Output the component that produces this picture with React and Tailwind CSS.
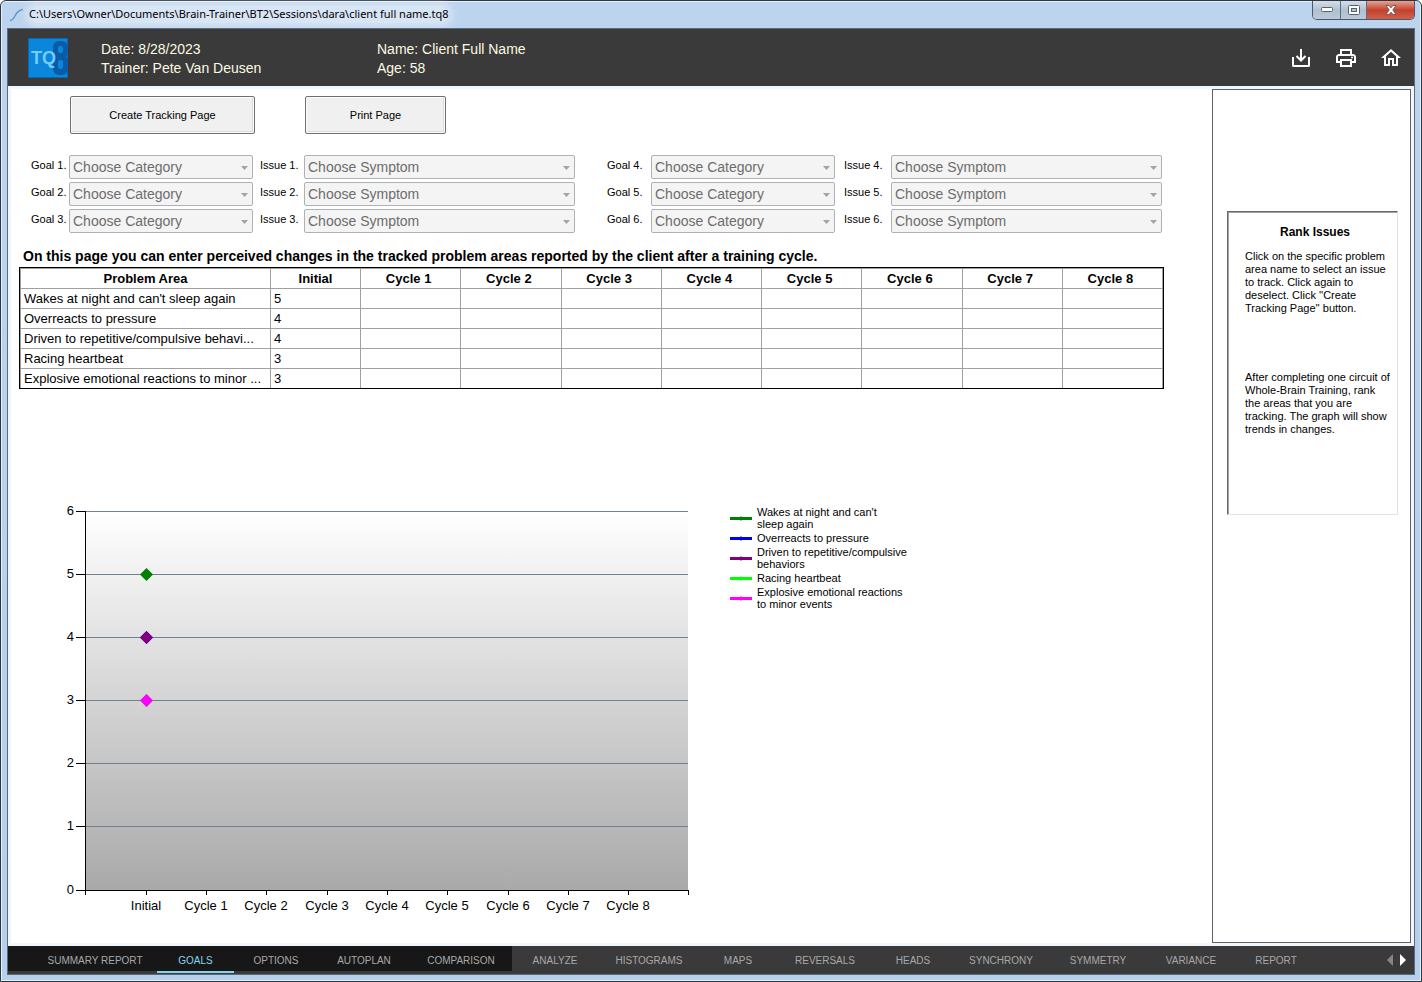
import React, { useState } from "react";
import { MdOutlineHome, MdOutlinePrint } from "react-icons/md";

const issues = [
  {
    area: "Wakes at night and can't sleep again",
    legend: ["Wakes at night and can't", "sleep again"],
    color: "#008000",
    initial: 5,
  },
  {
    area: "Overreacts to pressure",
    legend: ["Overreacts to pressure"],
    color: "#0000ee",
    initial: 4,
  },
  {
    area: "Driven to repetitive/compulsive behavi...",
    legend: ["Driven to repetitive/compulsive", "behaviors"],
    color: "#800080",
    initial: 4,
  },
  {
    area: "Racing heartbeat",
    legend: ["Racing heartbeat"],
    color: "#00ff00",
    initial: 3,
  },
  {
    area: "Explosive emotional reactions to minor ...",
    legend: ["Explosive emotional reactions", "to minor events"],
    color: "#ff00ff",
    initial: 3,
  },
];

const cycles = [1, 2, 3, 4, 5, 6, 7, 8];

const tabs = [
  { name: "SUMMARY REPORT", width: "w-[124px]", dark: true },
  { name: "GOALS", width: "w-[77px]", dark: true },
  { name: "OPTIONS", width: "w-[84px]", dark: true },
  { name: "AUTOPLAN", width: "w-[92px]", dark: true },
  { name: "COMPARISON", width: "w-[102px]", dark: true },
  { name: "ANALYZE", width: "w-[86px]" },
  { name: "HISTOGRAMS", width: "w-[102px]" },
  { name: "MAPS", width: "w-[76px]" },
  { name: "REVERSALS", width: "w-[98px]" },
  { name: "HEADS", width: "w-[78px]" },
  { name: "SYNCHRONY", width: "w-[98px]" },
  { name: "SYMMETRY", width: "w-[96px]" },
  { name: "VARIANCE", width: "w-[90px]" },
  { name: "REPORT", width: "w-[80px]" },
];

const TitleBar = () => (
  <div className="flex h-[27px] items-start justify-between">
    <div className="flex h-[27px] items-center pl-[2px]">
      <svg width="15" height="14" viewBox="0 0 15 14" fill="none">
        <path d="M1 12.500C7 12 5 2.500 14 1.500" stroke="#4f94cf" strokeWidth="1.300" />
      </svg>
      <span className="ml-[5px] rounded-full bg-white/40 font-['Noto_Sans','Open_Sans',sans-serif] text-[11px] text-black shadow-[0_0_8px_4px_rgba(255,255,255,0.4)]">
        C:\Users\Owner\Documents\Brain-Trainer\BT2\Sessions\dara\client full
        name.tq8
      </span>
    </div>
    <div className="flex h-[19px] overflow-hidden rounded-b-[5px] border border-t-0 border-[#4c5968]">
      <button
        type="button"
        aria-label="Minimize"
        className="flex w-7 items-center justify-center border-r border-[#5f6d7c] bg-linear-to-b from-[#d3dfeb] via-[#b1c0d0] via-50% to-[#b9c9da]"
      >
        <svg width="12" height="6" viewBox="0 0 12 6">
          <rect x="0.500" y="0.500" width="11" height="4" rx="1" fill="#fff" stroke="#566170" />
        </svg>
      </button>
      <button
        type="button"
        aria-label="Maximize"
        className="flex w-[26px] items-center justify-center border-r border-[#5f6d7c] bg-linear-to-b from-[#d3dfeb] via-[#b1c0d0] via-50% to-[#b9c9da]"
      >
        <svg width="12" height="10" viewBox="0 0 12 10">
          <rect x="0.500" y="0.500" width="11" height="9" rx="1" fill="#fff" stroke="#566170" />
          <rect x="3.500" y="3.500" width="5" height="3" fill="#b5c4d4" stroke="#566170" />
        </svg>
      </button>
      <button
        type="button"
        aria-label="Close"
        className="flex w-[47px] items-center justify-center bg-linear-to-b from-[#e3a193] via-[#c4412c] via-50% to-[#d0604a]"
      >
        <svg width="12" height="10" viewBox="0 0 12 10">
          <path
            d="M1 0.500h3l2 2.300 2-2.300h3L7.800 5 11 9.500H8L6 7.200 4 9.500H1L4.200 5z"
            fill="#fff"
            stroke="#69514e"
            strokeWidth="0.900"
          />
        </svg>
      </button>
    </div>
  </div>
);

const Logo = () => (
  <svg width="40" height="40" viewBox="0 0 40 40" role="img" aria-label="TQ8">
    <rect x="0.500" y="0.500" width="39" height="39" fill="#0a86da" stroke="#0a66b4" />
    <rect x="25" y="3" width="15" height="17" rx="6" fill="#0a5ca8" />
    <rect x="25" y="17" width="15" height="20" rx="6" fill="#0a5ca8" />
    <rect x="30" y="8" width="5" height="7" rx="2" fill="#0a86da" />
    <rect x="30" y="22" width="5" height="9" rx="2" fill="#0a86da" />
    <text
      x="3"
      y="26"
      fontSize="18"
      fontWeight="700"
      fill="#74cdfb"
      fontFamily="'Liberation Sans', Arial, sans-serif"
    >
      TQ
    </text>
  </svg>
);

const Header = () => (
  <header className="flex h-[57px] shrink-0 items-center bg-[#3a3a3a] pl-5 pr-[11px] text-[14px] leading-[19px] text-[#fbf9e2]">
    <Logo />
    <div className="ml-[33px] w-[276px] pt-[2px]">
      <p>Date: 8/28/2023</p>
      <p>Trainer: Pete Van Deusen</p>
    </div>
    <div className="flex-1 pt-[2px]">
      <p>Name: Client Full Name</p>
      <p>Age: 58</p>
    </div>
    <div className="flex items-center gap-[21px] text-white">
      <button type="button" aria-label="Save">
        <svg width="24" height="24" viewBox="0 0 24 24" fill="none" stroke="currentColor" strokeWidth="2">
          <path d="M4 11v8.500q0 .5.500.5h15q.5 0 .5-.5V11M12 3v11M7.500 10l4.500 4.500 4.500-4.500" />
        </svg>
      </button>
      <button type="button" aria-label="Print">
        <MdOutlinePrint size={24} />
      </button>
      <button type="button" aria-label="Home">
        <MdOutlineHome size={24} />
      </button>
    </div>
  </header>
);

const Picker = ({ id, placeholder }) => (
  <div className="relative">
    <select
      id={id}
      disabled
      className="block h-6 w-full appearance-none rounded-[2px] border border-[#adb2b5] bg-[#f4f4f4] px-[3px] text-[14px] leading-5 text-[#6d6d6d] opacity-100"
    >
      <option>{placeholder}</option>
    </select>
    <svg
      width="7"
      height="4"
      viewBox="0 0 7 4"
      className="pointer-events-none absolute right-[5px] top-[11px]"
    >
      <path d="M0 0h7L3.500 4z" fill="#a3a3a3" />
    </svg>
  </div>
);

const GoalFields = () => (
  <div className="ml-3 mr-[2px] mt-[21px] grid grid-cols-[38px_minmax(0,184fr)_51px_minmax(0,271fr)_76px_minmax(0,184fr)_56px_minmax(0,271fr)] gap-y-[3px] text-[11px] leading-5">
    {[1, 2, 3].map((row) => (
      <React.Fragment key={row}>
        <label htmlFor={`goal${row}`}>Goal {row}.</label>
        <Picker id={`goal${row}`} placeholder="Choose Category" />
        <label htmlFor={`issue${row}`} className="pl-[7px]">
          Issue {row}.
        </label>
        <Picker id={`issue${row}`} placeholder="Choose Symptom" />
        <label htmlFor={`goal${row + 3}`} className="pl-8">
          Goal {row + 3}.
        </label>
        <Picker id={`goal${row + 3}`} placeholder="Choose Category" />
        <label htmlFor={`issue${row + 3}`} className="pl-[9px]">
          Issue {row + 3}.
        </label>
        <Picker id={`issue${row + 3}`} placeholder="Choose Symptom" />
      </React.Fragment>
    ))}
  </div>
);

const cell = "border-b border-r border-[#a0a0a0] p-0";

const IssueTable = () => (
  <div className="border border-black">
    <table className="w-full table-fixed border-separate border-spacing-0 border-l border-t border-[#a0a0a0] text-[13px] leading-[19px]">
      <thead>
        <tr>
          <th className={`${cell} w-[250px]`}>Problem Area</th>
          <th className={`${cell} w-[90px]`}>Initial</th>
          {cycles.map((c) => (
            <th key={c} className={`${cell} pr-1`}>
              Cycle {c}
            </th>
          ))}
        </tr>
      </thead>
      <tbody className="[&>tr:last-child>td]:border-b-0">
        {issues.map((issue) => (
          <tr key={issue.area}>
            <td className={`${cell} overflow-hidden whitespace-nowrap pl-[3px]`}>
              {issue.area}
            </td>
            <td className={`${cell} pl-[3px]`}>{issue.initial}</td>
            {cycles.map((c) => (
              <td key={c} className={cell} />
            ))}
          </tr>
        ))}
      </tbody>
    </table>
  </div>
);

const Chart = () => {
  const left = 25;
  const right = 628;
  const top = 11;
  const bottom = 390;
  const stepX = (right - left) / 10;
  const y = (v) => Math.floor(bottom - (v * (bottom - top)) / 6);
  const x = (i) => Math.ceil(left + i * stepX);

  return (
    <svg
      width="640"
      height="420"
      viewBox="0 0 640 420"
      className="shrink-0"
      fontSize="13"
      shapeRendering="crispEdges"
    >
      <defs>
        <linearGradient id="plot" x1="0" y1="0" x2="0" y2="1">
          <stop offset="0" stopColor="#ffffff" />
          <stop offset="1" stopColor="#a9a9a9" />
        </linearGradient>
      </defs>
      <rect x={left} y={top} width={right - left} height={bottom - top} fill="url(#plot)" />
      {[0, 1, 2, 3, 4, 5, 6].map((v) => (
        <g key={v}>
          {v > 0 && <rect x={left} y={y(v)} width={right - left} height="1" fill="#708090" />}
          <rect x={left - 9} y={y(v)} width="9" height="1" />
          <text x={left - 11} y={y(v) + 4} textAnchor="end">
            {v}
          </text>
        </g>
      ))}
      <rect x={left} y={top} width="1" height={bottom - top} />
      <rect x={left} y={bottom} width={right - left + 1} height="1" />
      {[0, 1, 2, 3, 4, 5, 6, 7, 8, 9, 10].map((i) => (
        <rect key={i} x={x(i)} y={bottom} width="1" height="5" />
      ))}
      {["Initial", ...cycles.map((c) => `Cycle ${c}`)].map((label, i) => (
        <text key={label} x={x(i + 1)} y={bottom + 20} textAnchor="middle">
          {label}
        </text>
      ))}
      {issues.map((issue) => (
        <path
          key={issue.area}
          shapeRendering="auto"
          d={`M${x(1) + 0.5} ${y(issue.initial) - 6}l6.500 6.500-6.500 6.500-6.500-6.500z`}
          fill={issue.color}
        />
      ))}
    </svg>
  );
};

const Legend = () => (
  <ul className="flex flex-col gap-[2px] pt-[6px] text-[11px] leading-3">
    {issues.map((issue) => (
      <li key={issue.area} className="flex items-center gap-[5px]">
        <svg width="22" height="5" viewBox="0 0 22 5" fill={issue.color}>
          <path d="M0 1h22v3H0zM11 0l2 2.500-2 2.500-2-2.500z" />
        </svg>
        <span>
          {issue.legend.map((line) => (
            <span key={line} className="block">
              {line}
            </span>
          ))}
        </span>
      </li>
    ))}
  </ul>
);

const RankIssues = () => (
  <aside className="w-[199px] shrink-0 border border-[#5f6368] pl-[14px] pr-3 pt-[121px]">
    <div className="h-[304px] border border-b-[#e3e3e3] border-l-[#696969] border-r-[#e3e3e3] border-t-[#696969] pl-[17px] shadow-[inset_1px_1px_0_#a0a0a0]">
      <h2 className="pr-3 pt-3 text-center text-[12px] font-bold leading-4">
        Rank Issues
      </h2>
      <p className="mt-[10px] text-[11px] leading-[13px]">
        Click on the specific problem
        <br />
        area name to select an issue
        <br />
        to track. Click again to
        <br />
        deselect. Click ''Create
        <br />
        Tracking Page'' button.
      </p>
      <p className="mt-14 text-[11px] leading-[13px]">
        After completing one circuit of
        <br />
        Whole-Brain Training, rank
        <br />
        the areas that you are
        <br />
        tracking. The graph will show
        <br />
        trends in changes.
      </p>
    </div>
  </aside>
);

const BottomTabs = () => {
  const [active, setActive] = useState("GOALS");

  return (
    <footer className="flex h-7 shrink-0 bg-[#3a3a3a] text-[10px]">
      <div className="h-[25px] w-[25px] bg-[#171717]" />
      <nav className="flex flex-1">
        {tabs.map((tab) => (
          <button
            key={tab.name}
            type="button"
            onClick={() => setActive(tab.name)}
            className={`${tab.width} flex flex-col whitespace-nowrap text-center ${
              active === tab.name ? "text-[#86d3f2]" : "text-[#a8a8a8]"
            }`}
          >
            <span
              className={`block h-[25px] w-full pt-[2px] leading-[25px] ${
                tab.dark ? "bg-[#171717]" : ""
              }`}
            >
              {tab.name}
            </span>
            {active === tab.name && <span className="block h-[2px] w-full bg-[#86d3f2]" />}
          </button>
        ))}
      </nav>
      <div className="flex items-center gap-[7px] pr-2">
        <button type="button" aria-label="Previous tabs">
          <svg width="6" height="12" viewBox="0 0 6 12">
            <path d="M6 0v12L0 6z" fill="#858585" />
          </svg>
        </button>
        <button type="button" aria-label="Next tabs">
          <svg width="6" height="12" viewBox="0 0 6 12">
            <path d="M0 0v12l6-6z" fill="#ffffff" />
          </svg>
        </button>
      </div>
    </footer>
  );
};

const pageButton =
  "h-[38px] rounded-[2px] border border-[#707070] bg-[#f0f0f0] text-[11px] shadow-[inset_0_0_0_1px_#fcfcfc,inset_-2px_-2px_0_#dcdcdc]";

const App = () => {
  return (
    <div className="flex min-h-screen flex-col rounded-t-[6px] border border-[#2d3540] bg-linear-to-b from-[#bcd4ee] to-[#b5d0ec] px-[6px] pb-[6px] font-['Liberation_Sans',Arial,sans-serif] text-black shadow-[inset_0_0_0_1px_#e6f1fb]">
      <TitleBar />
      <div className="flex flex-1 flex-col border border-[#5b6b7c]">
        <Header />
        <div className="flex flex-1 border-[3px] border-[#f1f6fc] bg-white">
          <main className="flex-1 pl-2 pr-12 pt-[7px]">
            {/* Actions */}
            <div className="ml-[51px] flex gap-[50px]">
              <button type="button" className={`${pageButton} w-[185px]`}>
                Create Tracking Page
              </button>
              <button type="button" className={`${pageButton} w-[141px]`}>
                Print Page
              </button>
            </div>

            <GoalFields />

            <h1 className="ml-1 mt-3 text-[14px] font-bold leading-[22px]">
              On this page you can enter perceived changes in the tracked
              problem areas reported by the client after a training cycle.
            </h1>
            <IssueTable />

            {/* Trend chart */}
            <div className="ml-[41px] mt-[111px] flex gap-[30px]">
              <Chart />
              <Legend />
            </div>
          </main>
          <RankIssues />
        </div>
        <BottomTabs />
      </div>
    </div>
  );
};

export default App;
